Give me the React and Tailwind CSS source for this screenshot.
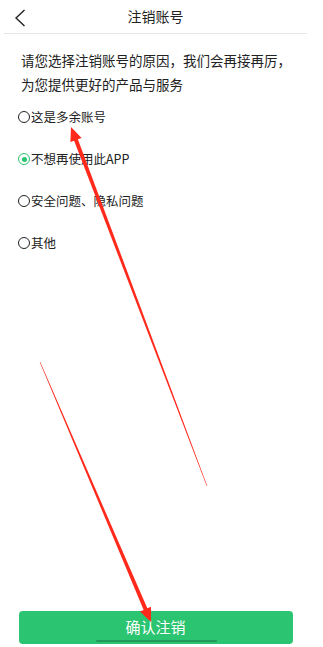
import React, { useState } from 'react';

const reasons = ['这是多余账号', '不想再使用此APP', '安全问题、隐私问题', '其他'];

const Radio = ({ checked }) => (
  <span
    className={
      'flex h-[12px] w-[12px] shrink-0 items-center justify-center rounded-full border ' +
      (checked ? 'border-[#2bc470]' : 'border-[#222]')
    }
  >
    {checked && <span className="h-[5px] w-[5px] rounded-full bg-[#2bc470]" />}
  </span>
);

const App = () => {
  const [selected, setSelected] = useState(1);

  return (
    <div
      className="relative h-[647px] w-[323px] overflow-hidden bg-white text-[#222]"
      style={{ fontFamily: '"Noto Sans CJK SC", "Noto Sans", sans-serif' }}
    >
      <div className="flex h-full w-[311px] flex-col">
        {/* Header */}
        <div className="relative mx-[4px] flex h-[34px] shrink-0 items-center justify-center border-b border-[#e6e6e6]">
          <button className="absolute left-[10px] top-[9px]">
            <svg width="12" height="18" viewBox="0 0 12 18" fill="none">
              <path d="M10.5 1L2 9l8.5 8" stroke="#222" strokeWidth="1.4" />
            </svg>
          </button>
          <span className="text-[14px] text-[#222]">注销账号</span>
        </div>

        {/* Intro */}
        <p className="mt-[14px] pl-[21px] pr-[10px] text-[13.5px] leading-[24px]">
          请您选择注销账号的原因，我们会再接再厉，为您提供更好的产品与服务
        </p>

        {/* Options */}
        <div className="flex flex-col">
          {reasons.map((r, i) => (
            <button
              key={r}
              onClick={() => setSelected(i)}
              className="flex h-[42px] items-center gap-[1px] pl-[18px] text-left text-[12.5px]"
            >
              <Radio checked={selected === i} />
              <span>{r}</span>
            </button>
          ))}
        </div>

        {/* Confirm */}
        <button className="relative mx-auto mb-[3px] mt-auto flex h-[33px] w-[274px] items-center justify-center rounded-[4px] bg-[#2bc470] text-[15px] text-white">
          确认注销
          <span className="absolute bottom-[2px] left-[77px] h-[2px] w-[121px] rounded-full bg-[#22995a]" />
        </button>
      </div>

      {/* annotation arrows */}
      <svg
        className="pointer-events-none absolute inset-0"
        width="323"
        height="647"
        viewBox="0 0 323 647"
      >
        <polygon
          fill="#ff2a1c"
          points="207.28,485.9 77.87,139.29 81.6,137.9 71,127 70.4,142.1 74.13,140.71 206.72,486.1"
        />
        <polygon
          fill="#ff2a1c"
          points="40.28,361.88 147.34,608.31 151.02,606.74 151,622 139.98,611.46 143.66,609.89 39.72,362.12"
        />
      </svg>
    </div>
  );
};

export default App;
